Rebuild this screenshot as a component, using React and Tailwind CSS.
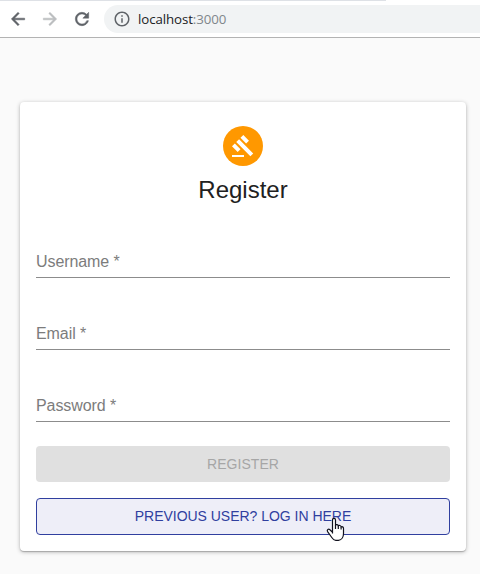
import React from 'react';
import { MdInfoOutline } from 'react-icons/md';

function NavIcon({ d, className }) {
  return (
    <svg className={className} viewBox="0 0 24 24" fill="currentColor" stroke="currentColor" strokeWidth="0.6">
      <path d={d} />
    </svg>
  );
}

function BrowserBar() {
  return (
    <header className="h-[38px] border-b border-[#b3b3b3] bg-white">
      <div className="h-px w-[386px] bg-[#dee1e6]" />
      <div className="mt-1 flex h-7 items-center">
        <NavIcon
          className="ml-2 size-5 shrink-0 text-[#5f6368]"
          d="M20 11H7.83l5.59-5.59L12 4l-8 8 8 8 1.41-1.41L7.83 13H20v-2z"
        />
        <NavIcon
          className="ml-3 size-5 shrink-0 text-[#bbbdbf]"
          d="M12 4l-1.41 1.41L16.17 11H4v2h12.17l-5.58 5.59L12 20l8-8z"
        />
        <NavIcon
          className="ml-3 size-5 shrink-0 text-[#5f6368]"
          d="M17.65 6.35A7.958 7.958 0 0012 4c-4.42 0-7.99 3.58-7.99 8s3.57 8 7.99 8c3.73 0 6.84-2.55 7.73-6h-2.08A5.99 5.99 0 0112 18c-3.31 0-6-2.69-6-6s2.69-6 6-6c1.66 0 3.14.69 4.22 1.78L13 11h7V4l-2.35 2.35z"
        />
        <div className="ml-3 flex h-7 flex-1 items-center rounded-l-full bg-[#f1f3f4] pl-[9px]">
          <MdInfoOutline className="size-[18px] text-[#5f6368]" />
          <span className="ml-[7px] mt-px font-['Open_Sans',sans-serif] text-[13.3px] tracking-[-0.1px] text-[#202124]">
            localhost<span className="text-[#80868b]">:3000</span>
          </span>
        </div>
      </div>
    </header>
  );
}

function Field({ label }) {
  return (
    <div className="mt-6 flex h-12 items-end border-b border-[#8c8c8c] pb-[3px] text-base leading-6 tracking-[-0.08px] text-[#7c7c7c]">
      {label} *
    </div>
  );
}

function HandCursor() {
  return (
    <svg className="absolute left-[289px] top-[18px] h-[25px] w-[19px]" viewBox="0 0 19 25">
      <path
        d="M6.5 16.5V3c0-2.3 3-2.3 3 0v5.2c.5-1 2.6-.8 2.8.7.8-.8 2.6-.5 2.8 1 .9-.6 2.4 0 2.4 1.5v5.1c0 3.2-1.6 6.6-5 6.8H9.8c-2 0-3-1.2-4-2.8L1.6 14.6c-1.1-1.9 1-3.1 2.3-1.8l2.6 2.4"
        fill="white"
        stroke="#10101c"
        strokeWidth="1.2"
        strokeLinejoin="round"
      />
      <path d="M9.5 8v4M12.3 9v3M15.1 10v2.5" fill="none" stroke="#10101c" strokeWidth="1.2" />
    </svg>
  );
}

export default function App() {
  return (
    <div className="h-[574px] w-[480px] overflow-hidden bg-[#fafafa] font-['Liberation_Sans',Arial,sans-serif]">
      <BrowserBar />
      <main className="ml-5 mt-16 h-[449px] w-[446px] rounded bg-white px-4 pt-6 shadow-[0_1px_4px_0_rgba(0,0,0,0.28),0_1px_1px_0_rgba(0,0,0,0.2)]">
        <div className="flex flex-col items-center">
          <div className="flex size-10 items-center justify-center rounded-full bg-[#ff9800]">
            <svg className="size-6" viewBox="0 0 24 24" fill="white">
              <path d="M1 21h12v2H1zM5.245 8.07l2.83-2.827 14.14 14.142-2.828 2.828zM12.317 1l5.657 5.656-2.83 2.83-5.654-5.66zM3.825 9.485l5.657 5.657-2.828 2.828-5.657-5.657z" />
            </svg>
          </div>
          <h1 className="mt-2 text-2xl leading-8 text-[#212121]">Register</h1>
        </div>
        <Field label="Username" />
        <Field label="Email" />
        <Field label="Password" />
        <button className="mt-6 block h-9 w-full rounded bg-[#e0e0e0] text-sm tracking-[0.05px] text-[#a6a6a6]">
          REGISTER
        </button>
        <button className="relative mt-4 block h-[37px] w-full rounded border border-[#303f9f] bg-[#eeeef8] pb-0.5 text-sm tracking-[-0.02px] text-[#303f9f]">
          PREVIOUS USER? LOG IN HERE
          <HandCursor />
        </button>
      </main>
    </div>
  );
}
